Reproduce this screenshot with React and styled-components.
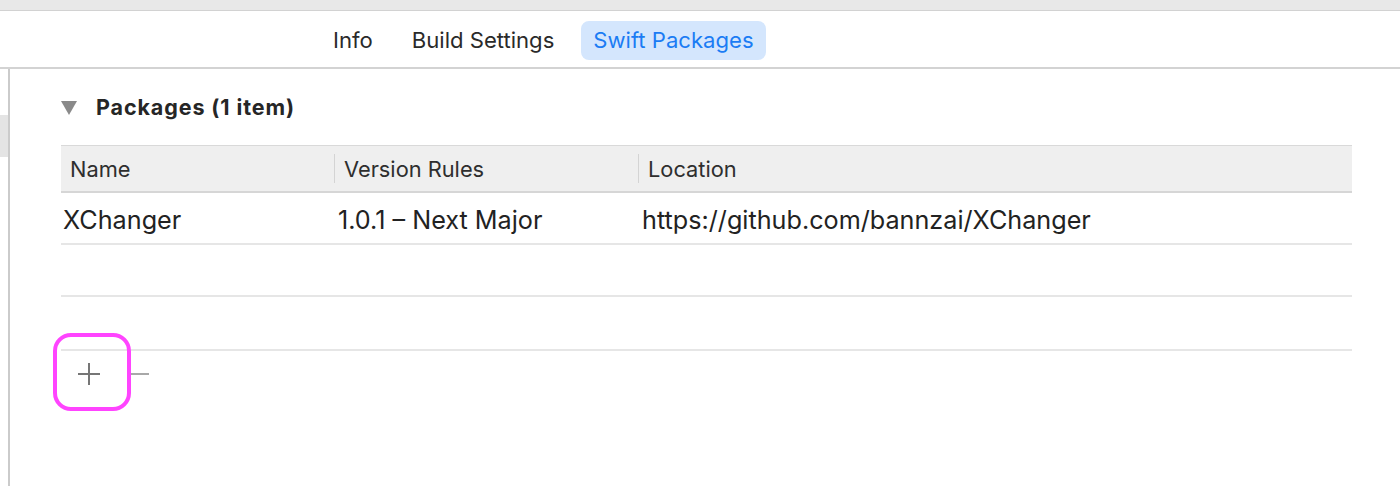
import React from "react";
import styled, { createGlobalStyle } from "styled-components";

const Global = createGlobalStyle`
  *, *::before, *::after { box-sizing: border-box; }
  html, body { margin: 0; padding: 0; background: #fff; }
  body { font-family: Inter, "Noto Sans", "Liberation Sans", sans-serif; color: #262626; }
`;

const Page = styled.div`
  width: 1400px;
  height: 486px;
  overflow: hidden;
  display: flex;
  flex-direction: column;
  background: #fff;
`;

const TopStrip = styled.div`
  height: 11px;
  background: #e8e8e8;
  border-bottom: 1px solid #d2d2d2;
  flex: none;
`;

const TabBar = styled.div`
  height: 58px;
  flex: none;
  display: flex;
  align-items: center;
  padding-left: 321px;
  padding-top: 2px;
  gap: 15px;
  border-bottom: 2px solid #d3d3d3;
`;

const Tab = styled.div`
  height: 39px;
  display: flex;
  align-items: center;
  padding: 0 12px;
  border-radius: 8px;
  font-size: 22.1px;
  color: ${p => (p.$active ? "#1b7cf4" : "#2a2a2a")};
  background: ${p => (p.$active ? "#d4e6fd" : "transparent")};
`;

const Body = styled.div`
  flex: 1;
  display: flex;
`;

const Sidebar = styled.div`
  width: 10px;
  flex: none;
  border-right: 2px solid #cbcbcb;
  padding-top: 46px;
`;

const SidebarSel = styled.div`
  height: 42px;
  background: #e4e4e4;
`;

const Main = styled.div`
  flex: 1;
  padding: 0 48px 0 51px;
  position: relative;
`;

const SectionHeader = styled.div`
  height: 76px;
  display: flex;
  align-items: center;
  gap: 19px;
  font-size: 21.5px;
  letter-spacing: 0.9px;
  font-weight: 700;
  color: #262626;
`;

const Triangle = styled.span`
  width: 0;
  height: 0;
  border-left: 8px solid transparent;
  border-right: 8px solid transparent;
  border-top: 14px solid #8a8a8a;
  margin-top: 2px;
`;

const Table = styled.div`
  display: flex;
  flex-direction: column;
`;

const Grid = styled.div`
  display: grid;
  grid-template-columns: 273px 304px 1fr;
`;

const HeaderRow = styled(Grid)`
  height: 48px;
  background: #efefef;
  border-top: 1px solid #d9d9d9;
  border-bottom: 2px solid #d6d6d6;
`;

const HeaderCell = styled.div`
  display: flex;
  align-items: center;
  padding-left: 9px;
  font-size: 21.8px;
  color: #2e2e2e;
  border-left: ${p => (p.$sep ? "1px solid #d4d4d4" : "none")};
  margin: 8px 0;
`;

const Row = styled(Grid)`
  height: 52px;
  padding-top: 4px;
  border-bottom: 2px solid #e6e6e6;
`;

const Cell = styled.div`
  display: flex;
  align-items: center;
  padding-left: ${p => (p.$first ? "2px" : "4px")};
  font-size: 25.2px;
  color: #222;
`;

const Spacer = styled.div`
  height: 54px;
  border-bottom: 2px solid #e6e6e6;
`;

const ButtonBar = styled.div`
  display: flex;
  align-items: center;
  height: 46px;
`;

const IconButton = styled.div`
  width: ${p => p.$w}px;
  height: 30px;
  display: flex;
  align-items: center;
  justify-content: center;
`;

const Highlight = styled.div`
  position: absolute;
  left: 43px;
  top: 264px;
  width: 78px;
  height: 78px;
  border: 4px solid #ff44ff;
  border-radius: 18px;
`;

export default function App() {
  return (
    <Page>
      <Global />
      <TopStrip />
      <TabBar>
        <Tab>Info</Tab>
        <Tab>Build Settings</Tab>
        <Tab $active>Swift Packages</Tab>
      </TabBar>
      <Body>
        <Sidebar>
          <SidebarSel />
        </Sidebar>
        <Main>
          <SectionHeader>
            <Triangle />
            <span>Packages (1 item)</span>
          </SectionHeader>
          <Table>
            <HeaderRow>
              <HeaderCell>Name</HeaderCell>
              <HeaderCell $sep>Version Rules</HeaderCell>
              <HeaderCell $sep>Location</HeaderCell>
            </HeaderRow>
            <Row>
              <Cell $first>XChanger</Cell>
              <Cell>1.0.1 – Next Major</Cell>
              <Cell>https://github.com/bannzai/XChanger</Cell>
            </Row>
            <Row />
            <Spacer />
            <ButtonBar>
              <IconButton $w={55}>
                <svg width="24" height="24" viewBox="0 0 24 24">
                  <path d="M12 1v22M1 12h22" stroke="#767676" strokeWidth="2" fill="none" />
                </svg>
              </IconButton>
              <IconButton $w={47}>
                <svg width="20" height="4" viewBox="0 0 20 4">
                  <path d="M0 2h19" stroke="#a8a8a8" strokeWidth="2" fill="none" />
                </svg>
              </IconButton>
            </ButtonBar>
          </Table>
          <Highlight />
        </Main>
      </Body>
    </Page>
  );
}
